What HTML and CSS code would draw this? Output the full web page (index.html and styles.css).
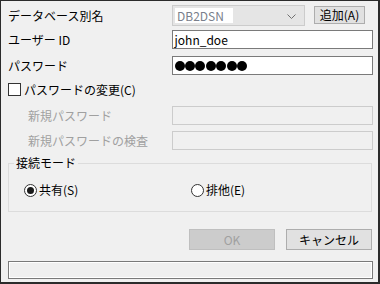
FILE: index.html
```html
<!DOCTYPE html>
<html>
<head>
    <meta charset="utf-8">
    <link rel="stylesheet" href="styles.css">
</head>
<body>
    <div class="dlg">
        <div class="row r1">
            <span class="lbl">データベース別名</span>
            <div class="combo">
                <span class="combo-val">DB2DSN</span>
                <svg class="chev" width="9" height="6" viewBox="0 0 9 6"><path d="M0.5 0.5 L4.5 4.5 L8.5 0.5" fill="none" stroke="#707070" stroke-width="1"/></svg>
            </div>
            <button class="btn btn-add">追加(A)</button>
        </div>
        <div class="row r2">
            <span class="lbl">ユーザー ID</span>
            <div class="edit">john_doe</div>
        </div>
        <div class="row r3">
            <span class="lbl">パスワード</span>
            <div class="edit dots">
                <i></i><i></i><i></i><i></i><i></i><i></i><i></i>
            </div>
        </div>
        <div class="row r4">
            <span class="chk"></span>
            <span class="chk-lbl">パスワードの変更(C)</span>
        </div>
        <div class="row r5">
            <span class="lbl sub off">新規パスワード</span>
            <div class="edit dis"></div>
        </div>
        <div class="row r6">
            <span class="lbl sub off">新規パスワードの検査</span>
            <div class="edit dis"></div>
        </div>
        <fieldset class="grp">
            <legend>接続モード</legend>
            <div class="radios">
                <label class="opt"><span class="radio on"></span>共有(S)</label>
                <label class="opt"><span class="radio"></span>排他(E)</label>
            </div>
        </fieldset>
        <div class="actions">
            <button class="btn btn-ok" disabled>OK</button>
            <button class="btn btn-cancel">キャンセル</button>
        </div>
        <div class="status"></div>
    </div>
</body>
</html>
```

FILE: styles.css
```css
html, body {
    margin: 0;
    padding: 0;
}

body {
    font-family: "Noto Sans CJK JP", "Liberation Sans", sans-serif;
    font-size: 12px;
    color: #000;
}

.dlg {
    width: 380px;
    height: 284px;
    box-sizing: border-box;
    border: 1px solid #2b2b2b;
    border-right-width: 2px;
    border-bottom-width: 2px;
    background: #f0f0f0;
    padding: 4px 5px 0 7px;
    display: flex;
    flex-direction: column;
}

.row {
    display: flex;
    align-items: center;
}

.r1 { height: 21px; }
.r2 { height: 19px; margin-top: 4px; }
.r3 { height: 19px; margin-top: 7px; }
.r4 { height: 17px; margin-top: 6px; }
.r5 { height: 19px; margin-top: 8px; }
.r6 { height: 19px; margin-top: 6px; }

.lbl {
    width: 164px;
    line-height: 14px;
}

.sub {
    padding-left: 20px;
    box-sizing: border-box;
}

.off {
    color: #a0a0a0;
}

.combo {
    width: 133px;
    height: 21px;
    box-sizing: border-box;
    border: 1px solid #cccccc;
    background: #e5e5e5;
    display: flex;
    align-items: center;
    padding: 2px;
    position: relative;
}

.combo-val {
    background: #fff;
    color: #7a7f8c;
    height: 15px;
    line-height: 15px;
    width: 56px;
    padding-left: 2px;
}

.chev {
    position: absolute;
    right: 8px;
    top: 8px;
}

.btn {
    font-family: inherit;
    font-size: 12px;
    margin: 0;
    padding: 0;
    background: #e1e1e1;
    border: 1px solid #adadad;
    color: #000;
    line-height: 14px;
}

.btn-add {
    width: 51px;
    height: 18px;
    margin-left: 9px;
    align-self: flex-start;
    margin-top: 1px;
}

.edit {
    width: 202px;
    height: 19px;
    box-sizing: border-box;
    border: 1px solid #7a7a7a;
    background: #fff;
    padding-left: 2px;
    line-height: 16px;
    display: flex;
    align-items: center;
}

.edit.dis {
    border-color: #cccccc;
    background: #f0f0f0;
}

.dots {
    gap: 0.4px;
    padding-left: 2px;
}

.dots i {
    display: block;
    width: 10px;
    height: 10px;
    border-radius: 50%;
    background: #000;
}

.chk {
    width: 13px;
    height: 13px;
    box-sizing: border-box;
    border: 1px solid #333;
    background: #fff;
    margin-right: 3px;
}

.chk-lbl {
    line-height: 14px;
}

.grp {
    margin: 6px 1px 0 0;
    padding: 0 0 0 15px;
    border: 1px solid #dcdcdc;
    height: 54px;
    box-sizing: content-box;
}

.grp legend {
    padding: 0 2px;
    margin-left: -10px;
    line-height: 14px;
}

.radios {
    display: flex;
    margin-top: 13px;
}

.opt {
    width: 167px;
    display: flex;
    align-items: center;
    line-height: 14px;
}

.radio {
    width: 13px;
    height: 13px;
    box-sizing: border-box;
    border: 1px solid #333;
    border-radius: 50%;
    background: #fff;
    margin-right: 2px;
    position: relative;
}

.radio.on::after {
    content: "";
    position: absolute;
    left: 2px;
    top: 2px;
    width: 7px;
    height: 7px;
    border-radius: 50%;
    background: #1a1a1a;
}

.actions {
    display: flex;
    justify-content: flex-end;
    gap: 11px;
    margin-top: 17px;
    padding-right: 1px;
}

.actions .btn {
    width: 86px;
    height: 21px;
}

.btn-ok {
    background: #cccccc;
    border-color: #bfbfbf;
    color: #a0a0a0;
}

.status {
    margin-top: 11px;
    height: 18px;
    box-sizing: border-box;
    border: 1px solid #7a7a7a;
    box-shadow: inset 1px 1px 0 #fff, inset -1px -1px 0 #fff;
    background: #f0f0f0;
}
```
